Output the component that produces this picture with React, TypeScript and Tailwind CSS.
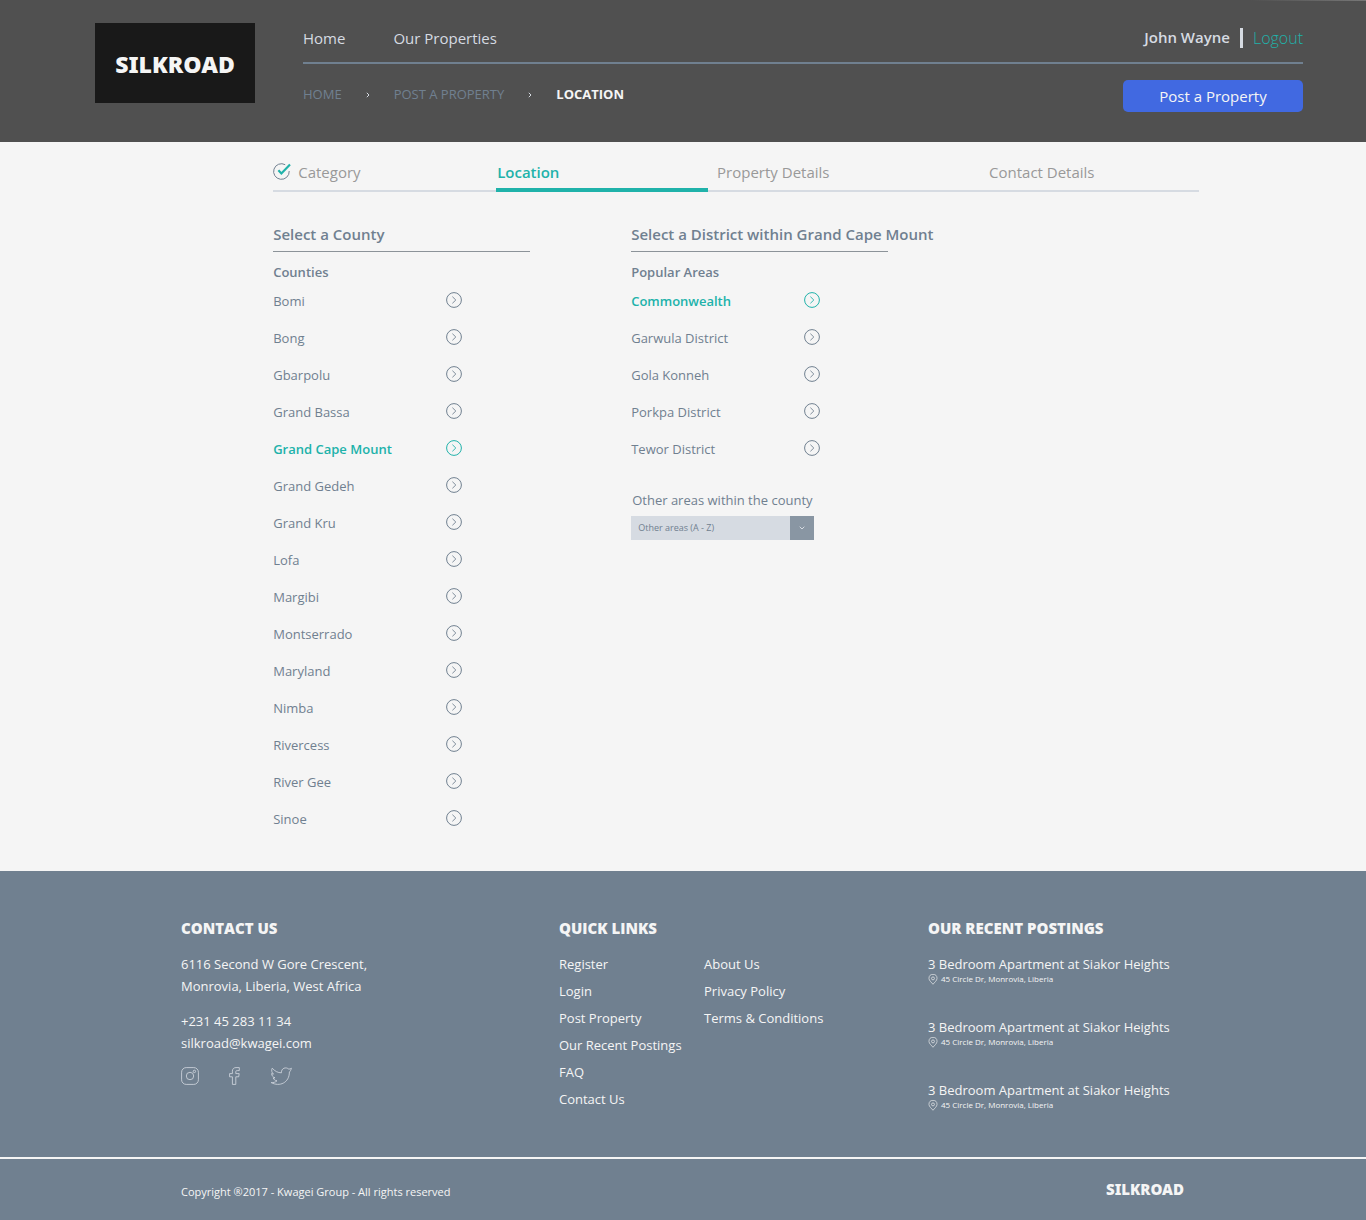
import { useState } from "react";

const COUNTIES = [
  "Bomi", "Bong", "Gbarpolu", "Grand Bassa", "Grand Cape Mount", "Grand Gedeh", "Grand Kru", "Lofa",
  "Margibi", "Montserrado", "Maryland", "Nimba", "Rivercess", "River Gee", "Sinoe",
];
const DISTRICTS = ["Commonwealth", "Garwula District", "Gola Konneh", "Porkpa District", "Tewor District"];
const LINKS = [
  ["Register", "Login", "Post Property", "Our Recent Postings", "FAQ", "Contact Us"],
  ["About Us", "Privacy Policy", "Terms & Conditions"],
];

function Separator() {
  return (
    <svg width="4" height="6" viewBox="0 0 4 6" fill="none" stroke="#d6dbe2" aria-hidden="true">
      <path d="M0.8 0.8 3 3 0.8 5.2" />
    </svg>
  );
}

function CircleArrow() {
  return (
    <svg className="shrink-0" width="16" height="16" viewBox="0 0 16 16" fill="none" stroke="currentColor" aria-hidden="true">
      <circle cx="8" cy="8" r="7.4" strokeWidth="1" />
      <path d="M6.4 4.7 9.8 8 6.4 11.3" strokeWidth="0.9" />
    </svg>
  );
}

function Pin() {
  return (
    <svg className="shrink-0" width="10" height="11" viewBox="0 0 10 12" fill="none" stroke="#f4f4f4" strokeWidth="0.7" aria-hidden="true">
      <path d="M5 11.2C3.6 9.4.6 7.2.6 4.8a4.4 4.4 0 0 1 8.8 0C9.4 7.2 6.4 9.4 5 11.2Z" />
      <circle cx="5" cy="4.8" r="1.6" />
    </svg>
  );
}

function ChoiceList({ items, selected, onSelect }: { items: string[]; selected: string; onSelect: (s: string) => void }) {
  return (
    <ul>
      {items.map((item) => (
        <li key={item}>
          <button
            type="button"
            aria-pressed={item === selected}
            onClick={() => onSelect(item)}
            className={
              item === selected
                ? "flex h-[37px] w-[189px] items-center justify-between text-left text-[13px] font-semibold text-[#20b2aa]"
                : "flex h-[37px] w-[189px] items-center justify-between text-left text-[13px] text-[#708090]"
            }
          >
            <span className="pt-1">{item}</span>
            <CircleArrow />
          </button>
        </li>
      ))}
    </ul>
  );
}

function Header() {
  return (
    <header className="relative flex gap-12 bg-[#505050] pt-[23px] pr-[63px] pb-[30px] pl-[95px]">
      <div className="absolute top-0 right-0 h-px w-[116px] bg-linear-to-r from-[#505050] to-[#777777]" />
      <a href="#" className="mb-[9px] flex h-20 w-40 shrink-0 items-center justify-center bg-[#191919] pt-[2px] font-['Noto_Sans'] text-[23px] font-black text-[#f5f5f5]">
        SILKROAD
      </a>
      <div className="flex-1">
        <div className="flex h-[41px] items-center justify-between border-b-2 border-[#708090] pb-2 text-[15px] text-[#d6dbe2]">
          <nav className="flex gap-12">
            <a href="#">Home</a>
            <a href="#">Our Properties</a>
          </nav>
          <div className="flex items-center gap-[10px] pb-[2px]">
            <span className="font-semibold">John Wayne</span>
            <span className="h-5 w-[3px] bg-[#d6dbe2]" />
            <a href="#" className="text-base font-light text-[#20b2aa]">Logout</a>
          </div>
        </div>
        <div className="mt-4 flex items-center justify-between">
          <nav aria-label="Breadcrumb" className="flex items-center gap-6 pb-[2px] text-[13px] text-[#708090]">
            <a href="#">HOME</a>
            <Separator />
            <a href="#">POST A PROPERTY</a>
            <Separator />
            <span className="font-bold text-[#f5f5f5]">LOCATION</span>
          </nav>
          <button type="button" className="h-8 w-[180px] rounded-[5px] bg-[#4169e1] text-[15px] text-[#f5f5f5]">
            Post a Property
          </button>
        </div>
      </div>
    </header>
  );
}

function Steps() {
  return (
    <ol className="grid h-[31px] grid-cols-[223fr_220fr_272fr_211fr] border-b-2 border-[#d6dbe2] text-[15px] text-[#999999]">
      <li className="flex gap-[6px]">
        <svg className="mt-[2px]" width="19" height="18" viewBox="0 0 19 18" fill="none" aria-hidden="true">
          <path d="M12.2 1.7A7.8 7.8 0 1 0 16.2 8" stroke="#708090" />
          <path d="m5.4 7.2 3 3.2L17 1.6" stroke="#20b2aa" strokeWidth="2.2" />
        </svg>
        <a href="#">Category</a>
      </li>
      <li className="pr-2" aria-current="step">
        <a href="#" className="block h-[31px] border-b-4 border-[#20b2aa] pl-px font-semibold text-[#20b2aa]">Location</a>
      </li>
      <li className="pl-px"><a href="#">Property Details</a></li>
      <li className="pl-px"><a href="#">Contact Details</a></li>
    </ol>
  );
}

function SocialIcons() {
  return (
    <div className="mt-3 flex items-center gap-[30px] pt-px text-[#d6dbe2]">
      <a href="#" aria-label="Instagram">
        <svg className="block" width="18" height="18" viewBox="0 0 18 18" fill="none" stroke="currentColor" strokeWidth="0.8">
          <rect x="0.6" y="0.6" width="16.8" height="16.8" rx="4.6" />
          <circle cx="9" cy="9" r="3.7" />
          <circle cx="13.4" cy="4.4" r="1.2" />
        </svg>
      </a>
      <a href="#" aria-label="Facebook">
        <svg className="block" width="11" height="18" viewBox="0 0 11 18" fill="none" stroke="currentColor" strokeWidth="0.8" strokeLinejoin="round">
          <path d="M3.4 17.4V9.8H.6V6.6h2.8V4.2C3.4 1.8 4.9.6 7 .6h3.3v3H8.2c-1 0-1.4.5-1.4 1.3v1.7h3.4l-.5 3.2H6.8v7.6Z" />
        </svg>
      </a>
      <a href="#" aria-label="Twitter">
        <svg className="block" width="22" height="18" viewBox="0 0 22 18" fill="none" stroke="currentColor" strokeWidth="0.8" strokeLinejoin="round">
          <path d="M21.400 1.200c-.8.500-1.600.800-2.500 1C15.800-.5 11.200 1.200 11.400 5.800 7.800 5.800 4.900 4.200 2.200 1.200c-1 2.200-.5 4.500 1.300 5.900-.7 0-1.300-.2-1.900-.5.1 2 1.400 3.700 3.400 4.200-.6.200-1.200.2-1.800.1.600 1.600 1.900 2.700 3.800 2.900C5.400 15.200 3.400 15.800 1.200 15.600c8.400 4.500 18.200.2 18.200-10.600.8-.8 1.500-1.700 2-3.800Z" />
        </svg>
      </a>
    </div>
  );
}

function Footer() {
  return (
    <footer className="bg-[#708090] text-[13px] text-[#f5f5f5]">
      <div className="grid h-[288px] grid-cols-[378fr_369fr_438fr] border-b-2 border-[#f5f5f5] pt-[45px] pl-[181px]">
        <section>
          <h2 className="text-[15px] leading-6 font-extrabold">CONTACT US</h2>
          <address className="mt-[13px] leading-[22px] not-italic">
            <p>6116 Second W Gore Crescent,<br />Monrovia, Liberia, West Africa</p>
            <p className="mt-[13px]">+231 45 283 11 34<br /><a href="#">silkroad@kwagei.com</a></p>
          </address>
          <SocialIcons />
        </section>
        <section>
          <h2 className="text-[15px] leading-6 font-extrabold">QUICK LINKS</h2>
          <div className="mt-[11px] flex">
            {LINKS.map((column) => (
              <ul key={column[0]} className="w-[145px] leading-[27px] whitespace-nowrap">
                {column.map((link) => (
                  <li key={link}><a href="#">{link}</a></li>
                ))}
              </ul>
            ))}
          </div>
        </section>
        <section>
          <h2 className="text-[15px] leading-6 font-extrabold">OUR RECENT POSTINGS</h2>
          <ul className="mt-[13px]">
            {[1, 2, 3].map((id) => (
              <li key={id} className="h-[63px]">
                <a href="#" className="block leading-[22px] font-medium">3 Bedroom Apartment at Siakor Heights</a>
                <p className="flex h-2 items-center gap-[3px] text-[8px] font-medium"><Pin />45 Circle Dr, Monrovia, Liberia</p>
              </li>
            ))}
          </ul>
        </section>
      </div>
      <div className="flex h-[61px] items-center justify-between pr-[182px] pl-[181px] text-[11px]">
        <p className="pt-[6px] font-medium">Copyright ®2017 - Kwagei Group - All rights reserved</p>
        <a href="#" className="font-['Noto_Sans'] text-[15px] font-black">SILKROAD</a>
      </div>
    </footer>
  );
}

export default function App() {
  const [county, setCounty] = useState("Grand Cape Mount");
  const [district, setDistrict] = useState("Commonwealth");
  return (
    <div className="min-h-screen bg-[#f5f5f5] font-['Open_Sans',sans-serif]">
      <Header />
      <main className="pt-[19px] pr-[167px] pb-[35px] pl-[20%]">
        <Steps />
        <div className="mt-[30px] flex gap-[101px] text-[#708090]">
          <section className="w-[257px]">
            <h2 className="h-[30px] border-b border-[#8c9399] text-[15px] leading-6 font-semibold">Select a County</h2>
            <h3 className="mt-[10px] h-[19px] text-[13px] leading-5 font-semibold">Counties</h3>
            <ChoiceList items={COUNTIES} selected={county} onSelect={setCounty} />
          </section>
          <section className="w-[257px]">
            <h2 className="h-[30px] border-b border-[#8c9399] text-[15px] leading-6 font-semibold whitespace-nowrap">
              Select a District within {county}
            </h2>
            <h3 className="mt-[10px] h-[19px] text-[13px] leading-5 font-semibold">Popular Areas</h3>
            <ChoiceList items={DISTRICTS} selected={district} onSelect={setDistrict} />
            <label htmlFor="other" className="mt-6 block pl-px text-[13px] leading-5">Other areas within the county</label>
            <div className="relative mt-[6px] h-6 w-[183px]">
              <select id="other" className="block h-6 w-full appearance-none bg-[#d6dbe2] pl-[7px] text-[9px] text-[#708090]">
                <option>Other areas (A - Z)</option>
              </select>
              <span className="pointer-events-none absolute inset-y-0 right-0 flex w-6 items-center justify-center bg-[#8996a3]">
                <svg width="6" height="4" viewBox="0 0 6 4" fill="none" stroke="#d6dbe2" aria-hidden="true">
                  <path d="M0.7 0.7 3 3 5.3 0.7" />
                </svg>
              </span>
            </div>
          </section>
        </div>
      </main>
      <Footer />
    </div>
  );
}
